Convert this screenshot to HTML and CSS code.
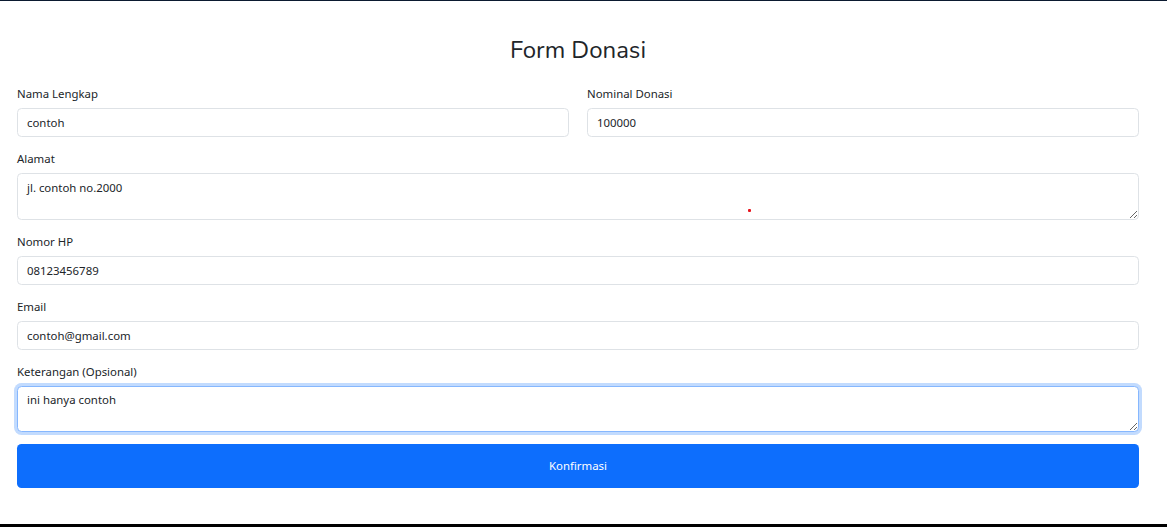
FILE: index.html
```html
<!DOCTYPE html>
<html lang="id">
<head>
<meta charset="utf-8">
<title>Form Donasi</title>
<link rel="stylesheet" href="styles.css">
</head>
<body>
<div class="page">
  <form class="form">
    <h2 class="title">Form Donasi</h2>
    <div class="row">
      <div class="group">
        <label class="label" for="nama">Nama Lengkap</label>
        <input class="control" id="nama" type="text" value="contoh">
      </div>
      <div class="group">
        <label class="label" for="nominal">Nominal Donasi</label>
        <input class="control" id="nominal" type="text" value="100000">
      </div>
    </div>
    <div class="group">
      <label class="label" for="alamat">Alamat</label>
      <div class="area-wrap">
        <textarea class="control area" id="alamat" rows="2" spellcheck="false">jl. contoh no.2000</textarea>
        <span class="dot"></span>
      </div>
    </div>
    <div class="group">
      <label class="label" for="hp">Nomor HP</label>
      <input class="control" id="hp" type="text" value="08123456789">
    </div>
    <div class="group">
      <label class="label" for="email">Email</label>
      <input class="control" id="email" type="text" value="contoh@gmail.com">
    </div>
    <div class="group">
      <label class="label" for="ket">Keterangan (Opsional)</label>
      <textarea class="control area focused" id="ket" rows="2" spellcheck="false">ini hanya contoh</textarea>
    </div>
    <button class="btn" type="button">Konfirmasi</button>
  </form>
</div>
</body>
</html>
```

FILE: styles.css
```css
* { box-sizing: border-box; }
html, body { margin: 0; padding: 0; background: #fff; }
body {
  font-family: "Noto Sans", "Open Sans", "Liberation Sans", sans-serif;
  color: #212529;
  font-size: 11.4px;
  line-height: 18px;
}
.page {
  height: 527px;
  border-top: 1px solid #0b1a30;
  border-bottom: 3px solid #000;
  padding: 35px 28px 0 17px;
}
.title {
  margin: 0 0 19px;
  text-align: center;
  font-family: "Nunito", "Lato", "Open Sans", sans-serif;
  font-weight: 400;
  font-size: 24px;
  line-height: 29px;
  color: #212529;
}
.row {
  display: grid;
  grid-template-columns: 1fr 1fr;
  column-gap: 18px;
}
.group { margin-bottom: 12px; }
.label {
  display: block;
  margin-bottom: 6px;
  font-size: 11.4px;
  line-height: 18px;
  padding-top: 1px;
  height: 18px;
}
.control {
  display: block;
  width: 100%;
  height: 29px;
  padding: 4.5px 9px;
  font-family: inherit;
  font-size: 11.4px;
  line-height: 18px;
  color: #212529;
  background: #fff;
  border: 1px solid #dee2e6;
  border-radius: 4.5px;
  outline: none;
}
.area {
  height: 46.5px;
  resize: vertical;
}
.area-wrap { position: relative; }
.dot {
  position: absolute;
  left: 731px;
  top: 36px;
  width: 3px;
  height: 3px;
  border-radius: 1px;
  background: #e8141e;
}
.focused {
  border-color: #86b7fe;
  box-shadow: 0 0 0 3px rgba(13, 110, 253, 0.25);
}
.btn {
  display: block;
  width: 100%;
  height: 44px;
  margin-top: 2px;
  border: 0;
  border-radius: 4.5px;
  background: #0d6efd;
  color: #fff;
  font-family: inherit;
  font-size: 11.4px;
  line-height: 18px;
  cursor: pointer;
}
```
